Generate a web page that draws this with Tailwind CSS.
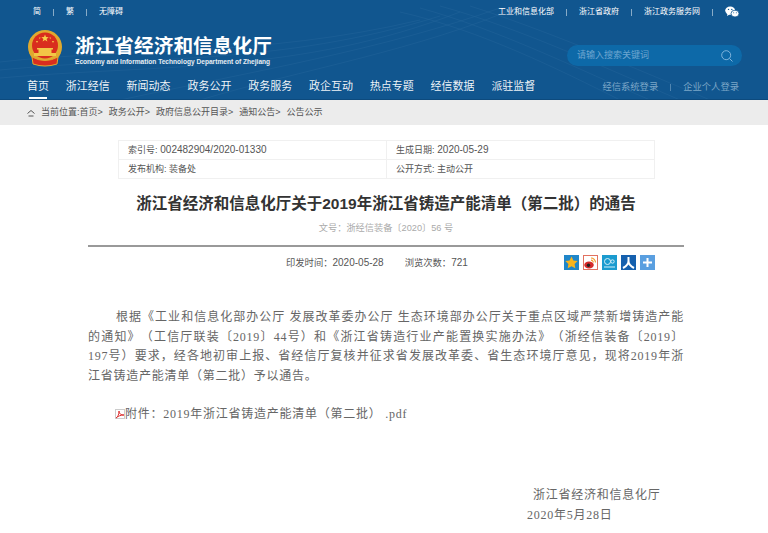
<!DOCTYPE html>
<html lang="zh-CN">
<head>
<meta charset="UTF-8" />
<meta name="viewport" content="width=device-width, initial-scale=1.0" />
<title>通告</title>
<script src="https://cdn.jsdelivr.net/npm/@tailwindcss/browser@4"></script>
</head>
<body class="bg-white font-['Liberation_Sans','Noto_Sans_CJK_SC',sans-serif] text-[#444] overflow-hidden h-[533px]">
<!-- Header -->
<header class="relative h-[100px] bg-[#11568f] text-white overflow-hidden border-b border-[#0d4a7d]">
	<svg class="absolute inset-0 opacity-10" width="768" height="100" fill="none" stroke="#9cc8ec" stroke-width="0.6">
		<path d="M0 62C120 48 260 58 420 20" /><path d="M0 70C140 56 280 66 440 16" /><path d="M0 78C160 64 300 74 460 12" /><path d="M120 100C260 70 380 50 500 8" /><path d="M200 100C300 70 420 50 520 6" />
		<path d="M400 12C480 30 560 70 620 100" /><path d="M420 8C500 30 580 70 650 100" /><path d="M440 6C520 28 610 70 680 100" /><path d="M470 6C540 28 640 70 710 100" />
	</svg>
	<div class="relative flex items-center justify-between h-[24px] pl-[33px] pr-[29px] text-[8px]">
		<div class="flex items-center">
			<span>简</span><i class="w-px h-[7px] bg-white/50 mx-3"></i>
			<span>繁</span><i class="w-px h-[7px] bg-white/50 mx-3"></i>
			<span>无障碍</span>
		</div>
		<div class="flex items-center">
			<span>工业和信息化部</span><i class="w-px h-[7px] bg-white/50 mx-3"></i>
			<span>浙江省政府</span><i class="w-px h-[7px] bg-white/50 mx-3"></i>
			<span>浙江政务服务网</span><i class="w-px h-[7px] bg-white/50 mx-3"></i>
			<svg width="14" height="12" viewBox="0 0 14 12" fill="#fff">
				<ellipse cx="5.200" cy="4.600" rx="5" ry="4.200" /><path d="M2.500 7.500 2 10l3-1.800z" />
				<ellipse cx="10" cy="7.600" rx="4" ry="3.400" stroke="#11568f" stroke-width=".8" />
				<circle cx="3.500" cy="3.400" r=".7" fill="#11568f" /><circle cx="6.800" cy="3.400" r=".7" fill="#11568f" />
				<circle cx="8.700" cy="6.800" r=".5" fill="#11568f" /><circle cx="11.300" cy="6.800" r=".5" fill="#11568f" />
			</svg>
		</div>
	</div>
	<div class="relative flex items-start justify-between h-[50px] pl-[27px] pr-[26px]">
		<div class="flex items-start mt-[6px]">
			<svg width="36" height="38" viewBox="0 0 36 38">
				<circle cx="18" cy="17" r="17" fill="#e0a92e" />
				<circle cx="18" cy="15.500" r="13" fill="#d92d1e" />
				<path d="M18 4.500l1 2.600 2.700.1-2.100 1.700.8 2.600-2.400-1.500-2.400 1.500.8-2.600-2.100-1.700 2.700-.1z" fill="#f7d04a" />
				<path d="M9 11h2l-1 2zM25 11h2l-1 2zM12 7.500h1.600l-.8 1.800zM22.400 7.500h1.600l-.8 1.800z" fill="#f7d04a" />
				<path d="M10 18h16v1.500h-1.500V23H11.500v-3.500H10z" fill="#f2c646" />
				<path d="M7 23h22v3H7z" fill="#f2c646" />
				<path d="M5 27q13 7 26 0l-1 7q-12 4-24 0z" fill="#d92d1e" stroke="#e0a92e" stroke-width="1" />
			</svg>
			<div class="ml-[12px] mt-[5px]">
				<div class="text-[19.7px] leading-[23px] font-bold whitespace-nowrap">浙江省经济和信息化厅</div>
				<div class="text-[6.6px] leading-[8px] font-bold whitespace-nowrap text-white/90">Economy and Information Technology Department of Zhejiang</div>
			</div>
		</div>
		<div class="flex items-center justify-between w-[175px] h-[21px] mt-[21px] pl-[10px] pr-[9px] rounded-full bg-[#0d69a8] text-[9px] text-[#6ea6d0]">
			<span>请输入搜索关键词</span>
			<svg width="12" height="12" viewBox="0 0 12 12" fill="none" stroke="#7fb4dc" stroke-width="1"><circle cx="5.200" cy="5.200" r="4.500" /><path d="M8.500 8.500 11.500 11.500" /></svg>
		</div>
	</div>
	<div class="relative flex items-start justify-between pl-[27px] pr-[29px]">
		<nav class="flex gap-[16.8px] text-[11px] leading-[25px] text-white/95 whitespace-nowrap">
			<a class="relative">首页<i class="absolute left-[2px] right-[2px] bottom-0 h-[2px] bg-white"></i></a>
			<a>浙江经信</a><a>新闻动态</a><a>政务公开</a><a>政务服务</a><a>政企互动</a><a>热点专题</a><a>经信数据</a><a>派驻监督</a>
		</nav>
		<div class="flex items-center h-[27px] text-[9.300px] text-[#7da7c8]">
			<span>经信系统登录</span><i class="w-px h-[7px] bg-[#7da7c8]/60 mx-3"></i><span>企业个人登录</span>
		</div>
	</div>
</header>

<!-- Breadcrumb -->
<div class="flex items-center h-[25px] pl-[27px] bg-[#ececec] text-[9px] text-[#555] whitespace-nowrap">
	<svg class="mr-[6px]" width="8" height="8" viewBox="0 0 8 8" fill="none" stroke="#555" stroke-width="1"><path d="M.5 4.500 4 1.500 7.500 4.500M1.500 7h5" /></svg>
	<span class="[word-spacing:3.5px]">当前位置:首页&gt; 政务公开&gt; 政府信息公开目录&gt; 通知公告&gt; 公告公示</span>
</div>

<main class="w-[596px] ml-[88px]">
	<!-- Info table -->
	<div class="grid grid-cols-[268px_268px] w-[537px] ml-[30px] mt-[15px] border border-[#f0f0f0] text-[10px] leading-[18px] text-[#555]">
		<div class="pl-[9px] border-r border-b border-[#f0f0f0]"><span class="text-[9px]">索引号:</span> 002482904/2020-01330</div>
		<div class="pl-[9px] border-b border-[#f0f0f0]"><span class="text-[9px]">生成日期:</span> 2020-05-29</div>
		<div class="pl-[9px] border-r border-[#f0f0f0] text-[9px]">发布机构: 装备处</div>
		<div class="pl-[9px] text-[9px]">公开方式: 主动公开</div>
	</div>

	<h1 class="mt-[14px] text-center text-[15.5px] leading-[22px] font-bold text-[#333] whitespace-nowrap">浙江省经济和信息化厅关于2019年浙江省铸造产能清单（第二批）的通告</h1>
	<p class="mt-[6px] text-center text-[9.2px] leading-[14px] text-[#aaa]">文号：浙经信装备〔2020〕56 号</p>
	<div class="mt-[10px] h-[2px] bg-[#999]"></div>

	<div class="flex items-center h-[31px] pl-[198px] text-[10px] text-[#555]">
		<span><span class="text-[9.3px]">印发时间：</span>2020-05-28</span>
		<span class="ml-[21px]"><span class="text-[9.3px]">浏览次数：</span>721</span>
		<div class="flex gap-[4px] ml-auto mr-[29px]">
			<svg width="15" height="15" viewBox="0 0 15 15"><rect width="15" height="15" fill="#1f86c9" /><path d="M7.500 1.500l1.900 3.900 4.300.6-3.100 3 .7 4.300-3.800-2-3.800 2 .7-4.300-3.100-3 4.300-.6z" fill="#f8b51d" /></svg>
			<svg width="15" height="15" viewBox="0 0 15 15"><rect x=".5" y=".5" width="14" height="14" fill="#fff" stroke="#e2715f" /><ellipse cx="6" cy="10" rx="4.800" ry="3.500" fill="#d52a2a" /><circle cx="5.500" cy="10.300" r="1.700" fill="#222" /><path d="M8 3a4.500 4.500 0 0 1 4.500 4.500M8 5.200a2.300 2.300 0 0 1 2.300 2.300" fill="none" stroke="#f39a2b" stroke-width="1.200" /></svg>
			<svg width="15" height="15" viewBox="0 0 15 15"><rect width="15" height="15" fill="#1b9bcf" /><circle cx="5.500" cy="6.500" r="3" fill="none" stroke="#d5f0fa" /><circle cx="10.500" cy="6.500" r="1.700" fill="none" stroke="#d5f0fa" /><path d="M2 12h11" stroke="#d5f0fa" /></svg>
			<svg width="15" height="15" viewBox="0 0 15 15"><rect width="15" height="15" fill="#1560ae" /><path d="M7.500 2v4C7.500 9 5 11.500 2 13M7.500 6c0 3 2.500 5.500 5.500 7" fill="none" stroke="#fff" stroke-width="2" /></svg>
			<svg width="15" height="15" viewBox="0 0 15 15"><rect width="15" height="15" fill="#5a9fe0" /><path d="M7.500 3v9M3 7.500h9" stroke="#fff" stroke-width="2" /></svg>
		</div>
	</div>

	<!-- Article body -->
	<div class="font-['Liberation_Serif','Noto_Sans_CJK_SC',serif] text-[12px] text-[#666] tracking-[.75px] [text-spacing-trim:space-all]">
		<div class="mt-[30px] leading-[19.700px] whitespace-nowrap">
			<p class="ml-[28px] [text-align-last:justify] whitespace-normal">根据《工业和信息化部办公厅 发展改革委办公厅 生态环境部办公厅关于重点区域严禁新增铸造产能</p>
			<p class="[text-align-last:justify] whitespace-normal">的通知》（工信厅联装〔2019〕44号）和《浙江省铸造行业产能置换实施办法》（浙经信装备〔2019〕</p>
			<p class="[text-align-last:justify] whitespace-normal">197号）要求，经各地初审上报、省经信厅复核并征求省发展改革委、省生态环境厅意见，现将2019年浙</p>
			<p>江省铸造产能清单（第二批）予以通告。</p>
		</div>
		<p class="flex items-center mt-[17px] ml-[27px] leading-[20px] whitespace-pre">
			<svg width="10" height="10" viewBox="0 0 10 10"><rect x=".5" y=".5" width="9" height="9" fill="#fff" stroke="#ccc" /><path d="M1 9c2-1 3-4 3-7 0 3 2 4 5 4-3 0-6 1-8 3z" fill="none" stroke="#d33" /></svg>
			<span>附件：2019年浙江省铸造产能清单（第二批） .pdf</span>
		</p>
		<p class="mt-[61px] ml-[445px] leading-[20px] whitespace-nowrap">浙江省经济和信息化厅</p>
		<p class="ml-[439px] leading-[20px] whitespace-nowrap">2020年5月28日</p>
	</div>
</main>
</body>
</html>
